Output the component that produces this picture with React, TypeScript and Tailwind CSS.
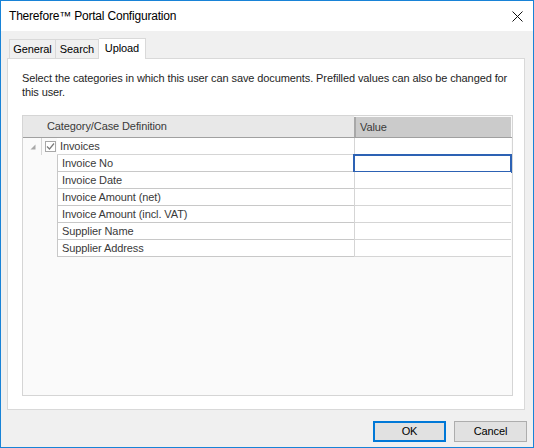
import React from 'react';

const font = { fontFamily: '"Liberation Sans", Arial, sans-serif' };

const fields = [
  'Invoice No',
  'Invoice Date',
  'Invoice Amount (net)',
  'Invoice Amount (incl. VAT)',
  'Supplier Name',
  'Supplier Address',
];

function CheckBox() {
  return (
    <div className="w-[11px] h-[11px] border border-[#a8a8a8] bg-white flex items-center justify-center">
      <svg width="9" height="9" viewBox="0 0 9 9">
        <path d="M1 4.5 L3.5 7 L8 1.5" stroke="#7a7a7a" strokeWidth="1.2" fill="none" />
      </svg>
    </div>
  );
}

export default function App() {
  return (
    <div
      className="w-[534px] h-[448px] border border-[#1883d7] flex flex-col text-[11px] tracking-[-0.1px] text-black bg-white"
      style={font}
    >
      {/* title bar */}
      <div className="h-[30px] flex items-center justify-between pl-[8px] pr-[10px] bg-white">
        <span className="text-[12px] tracking-[-0.2px]">Therefore™ Portal Configuration</span>
        <svg width="11" height="11" viewBox="0 0 11 11">
          <path d="M0.5 0.5 L10.5 10.5 M10.5 0.5 L0.5 10.5" stroke="#111" strokeWidth="1" />
        </svg>
      </div>

      {/* body */}
      <div className="flex-1 bg-[#f0f0f0] flex flex-col pt-[6px] pl-[6px] pr-[8px] pb-[5px]">
        {/* tabs */}
        <div className="flex items-end h-[21px] pl-[2px]">
          <div className="h-[19px] w-[47px] border border-b-0 border-[#d9d9d9] bg-[#f0f0f0] flex items-center justify-center">
            General
          </div>
          <div className="h-[19px] w-[43px] border border-l-0 border-b-0 border-[#d9d9d9] bg-[#f0f0f0] flex items-center justify-center">
            Search
          </div>
          <div className="h-[21px] w-[47px] border border-l-0 border-b-0 border-[#d9d9d9] bg-white flex items-center justify-center pb-[2px] -mb-px relative">
            Upload
          </div>
        </div>

        {/* panel */}
        <div className="flex-1 bg-white border border-[#d9d9d9] flex flex-col pl-[14px] pr-[11px] pt-[12px] pb-[13px]">
          <p className="leading-[14px] text-[#1e1e1e] pr-[4px]">
            Select the categories in which this user can save documents. Prefilled values can also be changed for this user.
          </p>

          {/* grid */}
          <div className="mt-[16px] flex-1 border border-[#d5d5d5] bg-[#fafafa] flex flex-col text-[#3a3a3a]">
            <div className="flex h-[22px] border-b border-[#a0a0a0]">
              <div className="w-[331px] bg-[#e8e8e8] pl-[24px] flex items-center">Category/Case Definition</div>
              <div className="flex-1 bg-[#cbcbcb] border-l-2 border-[#a8a8a8] mt-px mr-px pl-[4px] flex items-center">Value</div>
            </div>

            <div className="flex h-[17px]">
              <div className="w-[18px] flex items-center justify-center">
                <svg width="6" height="6" viewBox="0 0 6 6" className="mt-[1px] ml-[2px]">
                  <polygon points="5.5,0.5 5.5,5.5 0.5,5.5" fill="#a8a8a8" />
                </svg>
              </div>
              <div className="w-[16px] border-l border-[#d5d5d5] flex items-center pl-[3px]">
                <CheckBox />
              </div>
              <div className="w-[297px] border-b border-[#d5d5d5] bg-white flex items-center pl-[3px]">
                <span>Invoices</span>
              </div>
              <div className="flex-1 border-l border-b border-[#d5d5d5] bg-white mr-px" />
            </div>

            {fields.map((f, i) => (
              <div key={f} className="flex h-[17px]">
                <div className="w-[34px]" />
                <div className="w-[297px] border-l border-b border-[#c8c8c8] bg-white flex items-center pl-[4px]">
                  <span>{f}</span>
                </div>
                {i === 0 ? (
                  <div className="flex-1 border-2 border-[#2d62b4] bg-white -my-px -ml-px h-[19px]" />
                ) : (
                  <div className="flex-1 border-l border-b border-[#d5d5d5] bg-white mr-px" />
                )}
              </div>
            ))}
          </div>
        </div>

        {/* buttons */}
        <div className="flex justify-end gap-[8px] mt-[11px] mr-[-2px]">
          <button className="w-[73px] h-[21px] bg-[#e1e1e1] border-2 border-[#0078d7] flex items-center justify-center">
            OK
          </button>
          <button className="w-[73px] h-[21px] bg-[#e1e1e1] border border-[#adadad] flex items-center justify-center">
            Cancel
          </button>
        </div>
      </div>
    </div>
  );
}
